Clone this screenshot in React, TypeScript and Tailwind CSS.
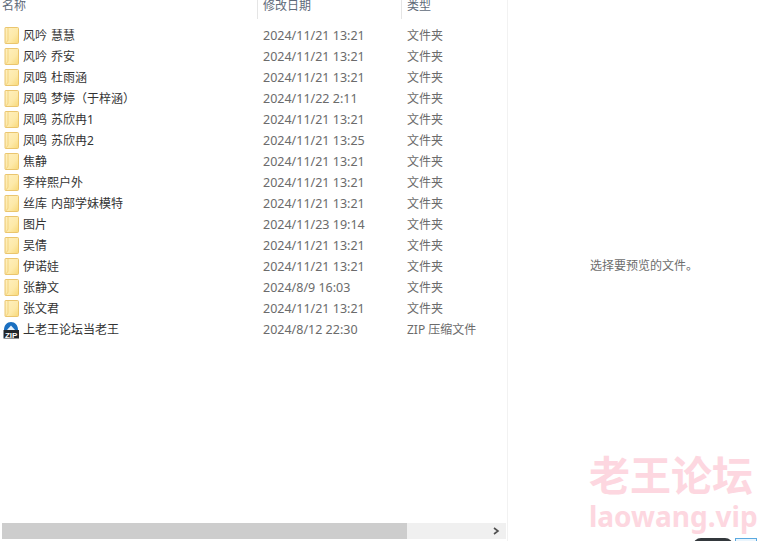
const font = "font-['Noto_Sans','Noto_Sans_CJK_SC',sans-serif]";

const rows = [
  { name: "风吟 慧慧", date: "2024/11/21 13:21" },
  { name: "风吟 乔安", date: "2024/11/21 13:21" },
  { name: "凤鸣 杜雨涵", date: "2024/11/21 13:21" },
  { name: "凤鸣 梦婷（于梓涵）", date: "2024/11/22 2:11" },
  { name: "凤鸣 苏欣冉1", date: "2024/11/21 13:21" },
  { name: "凤鸣 苏欣冉2", date: "2024/11/21 13:25" },
  { name: "焦静", date: "2024/11/21 13:21" },
  { name: "李梓熙户外", date: "2024/11/21 13:21" },
  { name: "丝库 内部学妹模特", date: "2024/11/21 13:21" },
  { name: "图片", date: "2024/11/23 19:14" },
  { name: "吴倩", date: "2024/11/21 13:21" },
  { name: "伊诺娃", date: "2024/11/21 13:21" },
  { name: "张静文", date: "2024/8/9 16:03" },
  { name: "张文君", date: "2024/11/21 13:21" },
];

function FolderIcon() {
  return (
    <svg width="16" height="17" viewBox="0 0 16 17" className="shrink-0">
      <defs>
        <linearGradient id="folderFill" x1="0" y1="0" x2="1" y2="1">
          <stop offset="0" stopColor="#fff0c0" />
          <stop offset="0.6" stopColor="#fde9a8" />
          <stop offset="1" stopColor="#f8d877" />
        </linearGradient>
      </defs>
      <path d="M2.5 .5 H14.5 Q15.5 .5 15.5 1.5 V15.5 Q15.5 16.5 14.5 16.5 H2.5 Q2 16.5 2 16 V1 Q2 .5 2.5 .5 Z" fill="url(#folderFill)" stroke="#e8c062" strokeWidth="0.9" />
      <path d="M5 1 V13 Q5 14.5 3 15.5" fill="none" stroke="#f2d078" strokeWidth="0.9" />
    </svg>
  );
}

function ZipIcon() {
  return (
    <svg width="16" height="18" viewBox="0 0 16 18" className="shrink-0">
      <path d="M1 9 C1 4 4 1 8 1 C12 1 15 4 15 9 Z" fill="#1a6fc0" />
      <path d="M4 9 L8 4.5 L12 9 Z" fill="#e8f2fb" />
      <rect x="0.5" y="9" width="15.5" height="8.5" fill="#22272c" />
      <text x="8.2" y="16.5" textAnchor="middle" fontSize="8" fontWeight="700" fill="#fff" fontFamily="Liberation Sans">ZIP</text>
    </svg>
  );
}

function Row({ icon, name, date, type }: { icon: React.ReactNode; name: string; date: string; type: string }) {
  return (
    <div className="flex h-[21px] items-center">
      <div className="flex w-[263px] items-center pl-[3px]">
        {icon}
        <span className="ml-[4px] text-[12px] text-[#333] [word-spacing:1px]">{name}</span>
      </div>
      <div className="w-[144px] pt-[2px] text-[12.5px] text-[#6b6b6b]">{date}</div>
      <div className="text-[12px] text-[#6b6b6b]">{type}</div>
    </div>
  );
}

export default function App() {
  return (
    <div className={`${font} relative flex h-[541px] w-[776px] overflow-hidden bg-white`}>
      <div className="flex w-[508px] flex-col border-r border-[#f2f2f2]">
        <div className="flex h-[19px] items-start text-[12px] leading-[12px] text-[#5f6b7a]">
          <div className="w-[257px] pl-[2px]">名称</div>
          <div className="h-full w-[144px] border-l border-[#e5e5e5] pl-[5px]">修改日期</div>
          <div className="h-full border-l border-[#e5e5e5] pl-[5px]">类型</div>
        </div>
        <div className="mt-[6px] flex flex-col">
          {rows.map((r) => (
            <Row key={r.name} icon={<FolderIcon />} name={r.name} date={r.date} type="文件夹" />
          ))}
          <Row icon={<ZipIcon />} name="上老王论坛当老王" date="2024/8/12 22:30" type="ZIP 压缩文件" />
        </div>
        <div className="mt-auto mb-[2px] ml-[2px] mr-[1px] flex h-[16px] items-center bg-[#f0f0f0] pr-[6px]">
          <div className="h-full w-[405px] bg-[#cdcdcd]" />
          <svg width="8" height="8" viewBox="0 0 8 8" className="ml-auto">
            <path d="M2 1 L6 4 L2 7" fill="none" stroke="#505050" strokeWidth="1.6" />
          </svg>
        </div>
      </div>
      <div className="flex flex-1 items-center justify-center pb-[9px] pl-[4px] text-[12px] text-[#6d6d6d]">选择要预览的文件。</div>

      <div className="absolute left-[589px] top-[452px] text-[41px] leading-[46px] font-bold text-[#fdd7e0]">老王论坛</div>
      <div className="absolute left-[589px] top-[499px] text-[28px] leading-[34px] font-bold text-[#fdd7e0]">laowang.vip</div>
      <div className="absolute left-[693px] top-[538px] h-[8px] w-[40px] rounded-t-[8px] bg-[#33383c]" />
      <div className="absolute left-[735px] top-[538px] h-[8px] w-[22px] border border-[#5aa9e0] bg-[#eaf5fd]" />
    </div>
  );
}
